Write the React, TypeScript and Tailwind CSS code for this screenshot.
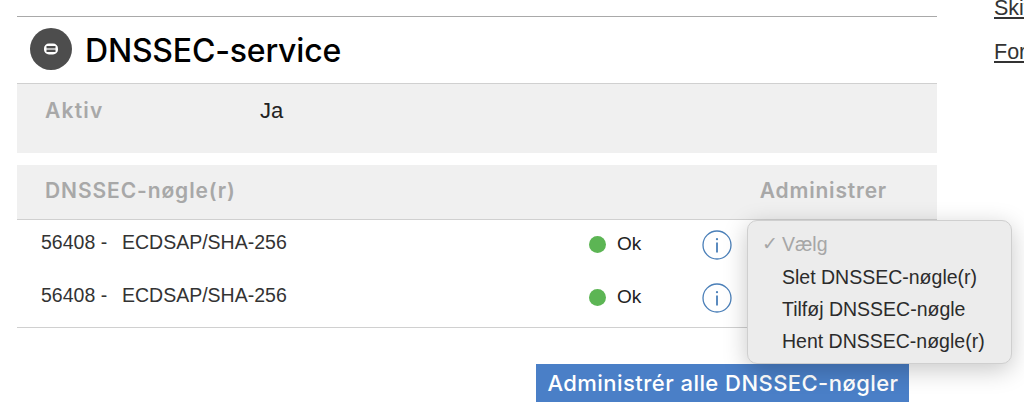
import React from "react";

const rows = ["56408", "56408"];

function InfoIcon() {
  return (
    <svg width="30" height="30" viewBox="0 0 30 30" fill="none">
      <circle cx="15" cy="15" r="14" stroke="#4a7fb8" strokeWidth="1.3" />
      <circle cx="15" cy="9.2" r="1.1" fill="#4a7fb8" />
      <rect x="14.1" y="12.5" width="1.8" height="10" fill="#4a7fb8" />
    </svg>
  );
}

function TitleIcon() {
  return (
    <svg width="42" height="42" viewBox="0 0 42 42">
      <circle cx="21" cy="21" r="21" fill="#4d4d4d" />
      <rect x="14" y="15.5" width="14" height="11" rx="5" fill="#fff" />
      <rect x="16.5" y="18" width="9" height="2.4" fill="#4d4d4d" />
      <rect x="16.5" y="21.6" width="9" height="2.4" fill="#4d4d4d" />
    </svg>
  );
}

export default function App() {
  return (
    <div className="flex h-[413px] w-[1024px] overflow-hidden bg-white pl-[17px] pt-4 font-['Inter',sans-serif]">
      <main className="relative w-[920px] shrink-0 border-t border-[#a9a9a9]">
        <div className="flex h-[67px] items-center gap-[13px] border-b border-[#d0d0d0] pl-[13px]">
          <span className="mb-[3px] flex">
            <TitleIcon />
          </span>
          <h1 className="mt-[2px] text-[32px] font-medium leading-none tracking-[-0.2px] text-black">DNSSEC-service</h1>
        </div>

        <section className="flex h-[69px] items-start bg-[#f0f0f0] pl-7 pt-[15px]">
          <span className="w-[215px] text-[21px] font-semibold leading-6 tracking-[1.2px] text-[#a8a8a8]">Aktiv</span>
          <span className="font-['Liberation_Sans',sans-serif] text-[22px] leading-6 text-[#222]">Ja</span>
        </section>

        <section className="mt-3 flex h-[55px] items-center justify-between border-b border-[#d0d0d0] bg-[#f0f0f0] pb-[2px] pl-7 pr-[50px]">
          <span className="text-[21px] font-semibold tracking-[0.9px] text-[#a8a8a8]">DNSSEC-nøgle(r)</span>
          <span className="text-[21px] font-semibold tracking-[0.8px] text-[#a8a8a8]">Administrer</span>
        </section>

        <section className="flex h-[108px] flex-col border-b border-[#d0d0d0]">
          {rows.map((key, i) => (
            <div key={i} className="flex h-[53px] items-center pb-1 pl-6">
              <span className="mb-[4px] flex w-[548px] font-['Liberation_Sans',sans-serif] text-[19.5px] text-[#333]">
                <span className="w-[81px]">{key} -</span>
                <span>ECDSAP/SHA-256</span>
              </span>
              <span className="h-[17px] w-[17px] rounded-full bg-[#5cb554]" />
              <span className="ml-[11px] w-[85px] font-['Liberation_Sans',sans-serif] text-[19px] text-[#222]">Ok</span>
              <InfoIcon />
            </div>
          ))}
        </section>

        <div className="mt-[36px] flex justify-end pr-7">
          <button className="h-[38px] w-[373px] bg-[#4a7fc7] pl-[1px] text-[22px] font-medium tracking-[0.45px] text-white">Administrér alle DNSSEC-nøgler</button>
        </div>

        <div className="absolute left-[730px] top-[203px] z-10 w-[265px] rounded-[10px] border border-[#cfcfcf] bg-[#ececec] pb-[6px] pt-[7px] font-['Liberation_Sans',sans-serif] text-[19.5px] text-[#2b2b2b] shadow-[0_6px_24px_rgba(0,0,0,0.22)]">
          <div className="relative h-[33px] pl-[34px] leading-8 text-[#a6a6a6]">
            <span className="absolute left-[14px] text-[19px]">✓</span>Vælg
          </div>
          <div className="h-8 pl-[34px] leading-8">Slet DNSSEC-nøgle(r)</div>
          <div className="h-8 pl-[34px] leading-8">Tilføj DNSSEC-nøgle</div>
          <div className="h-8 pl-[34px] leading-8">Hent DNSSEC-nøgle(r)</div>
        </div>
      </main>

      <aside className="-mt-[16px] ml-[57px] flex shrink-0 flex-col gap-[14px] font-['Liberation_Sans',sans-serif] text-[21.5px] leading-[30px] text-[#333]">
        <a className="-mt-[7px] underline">Skift</a>
        <a className="underline">Forny</a>
      </aside>
    </div>
  );
}
